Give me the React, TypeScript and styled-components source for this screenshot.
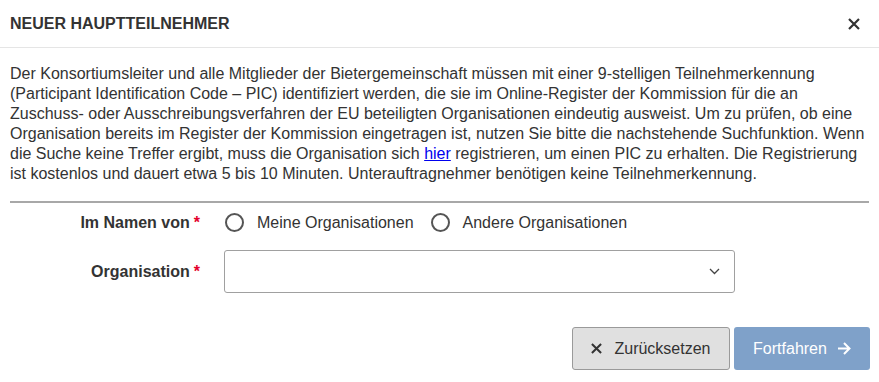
import React from "react";
import styled, { createGlobalStyle } from "styled-components";

const Global = createGlobalStyle`
  html, body { margin: 0; padding: 0; background: #fff; }
  body { font-family: "Liberation Sans", Arial, sans-serif; color: #333; }
  * { box-sizing: border-box; }
`;

const Dialog = styled.div`
  width: 879px;
  height: 382px;
  background: #fff;
  display: flex;
  flex-direction: column;
`;

const Header = styled.div`
  height: 48px;
  display: flex;
  align-items: center;
  justify-content: space-between;
  padding: 0 10px 0 10px;
  border-bottom: 1px solid #e5e5e5;
`;

const Title = styled.h1`
  margin: 0;
  font-size: 16px;
  font-weight: 700;
  color: #333;
  letter-spacing: 0;
`;

const CloseButton = styled.button`
  width: 30px;
  height: 30px;
  border: 0;
  background: transparent;
  padding: 0;
  display: flex;
  align-items: center;
  justify-content: center;
  color: #333;
  cursor: pointer;
`;

const Body = styled.div`
  padding: 16px 10px 0 10px;
  display: flex;
  flex-direction: column;
`;

const Intro = styled.p`
  margin: 0;
  font-size: 16px;
  line-height: 20px;
  color: #333;
`;

const Link = styled.a`
  color: #0000ee;
  text-decoration: underline;
`;

const Divider = styled.hr`
  margin: 17px 0 0 0;
  border: 0;
  border-top: 2px solid #a8a8a8;
  height: 0;
`;

const Form = styled.div`
  display: flex;
  flex-direction: column;
  padding-top: 6px;
  gap: 14px;
`;

const Row = styled.div<{ $h: number }>`
  display: grid;
  grid-template-columns: 190px 511px;
  column-gap: 24px;
  align-items: center;
  height: ${(p) => p.$h}px;
`;

const Label = styled.label`
  text-align: right;
  font-size: 16px;
  font-weight: 700;
  color: #333;
`;

const Req = styled.span`
  color: #e4002b;
  margin-left: 4px;
`;

const RadioGroup = styled.div`
  display: flex;
  align-items: center;
  gap: 17px;
  padding-left: 1px;
`;

const RadioOption = styled.label`
  display: flex;
  align-items: center;
  gap: 13px;
  font-size: 16px;
  color: #333;
`;

const RadioCircle = styled.span`
  width: 19px;
  height: 19px;
  border-radius: 50%;
  border: 2px solid #555;
  background: #fff;
  display: inline-block;
`;

const Select = styled.div`
  height: 43px;
  border: 1px solid #a0a0a0;
  border-radius: 3px;
  display: flex;
  align-items: center;
  justify-content: flex-end;
  padding-right: 14px;
  color: #444;
`;

const Footer = styled.div`
  display: flex;
  justify-content: flex-end;
  gap: 4px;
  padding: 34px 9px 0 0;
`;

const ResetButton = styled.button`
  width: 158px;
  height: 43px;
  border: 1px solid #9a9a9a;
  border-radius: 3px;
  background: #e0e0e0;
  color: #333;
  font-family: "Liberation Sans", Arial, sans-serif;
  font-size: 16px;
  display: flex;
  align-items: center;
  justify-content: center;
  gap: 12px;
  padding: 0;
`;

const PrimaryButton = styled.button`
  width: 136px;
  height: 43px;
  border: 0;
  border-radius: 3px;
  background: #7fa1c9;
  color: #fff;
  font-family: "Liberation Sans", Arial, sans-serif;
  font-size: 16px;
  display: flex;
  align-items: center;
  justify-content: center;
  gap: 10px;
  padding: 0;
`;

const XIcon = ({ size = 12, w = 2.2 }: { size?: number; w?: number }) => (
  <svg width={size} height={size} viewBox="0 0 12 12" fill="none">
    <path d="M1 1L11 11M11 1L1 11" stroke="currentColor" strokeWidth={w} strokeLinecap="butt" />
  </svg>
);

const Chevron = () => (
  <svg width="11" height="7" viewBox="0 0 11 7" fill="none">
    <path d="M1 1L5.5 5.5L10 1" stroke="#444" strokeWidth="1.3" />
  </svg>
);

const Arrow = () => (
  <svg width="14" height="13" viewBox="0 0 14 13" fill="none">
    <path d="M1 6.5H12.5M7 1L12.5 6.5L7 12" stroke="#fff" strokeWidth="2" />
  </svg>
);

export default function App() {
  return (
    <>
      <Global />
      <Dialog>
        <Header>
          <Title>NEUER HAUPTTEILNEHMER</Title>
          <CloseButton aria-label="Schließen">
            <XIcon size={12} w={2.2} />
          </CloseButton>
        </Header>
        <Body>
          <Intro>
            Der Konsortiumsleiter und alle Mitglieder der Bietergemeinschaft müssen mit einer 9-stelligen Teilnehmerkennung
            (Participant Identification Code – PIC) identifiziert werden, die sie im Online-Register der Kommission für die an
            Zuschuss- oder Ausschreibungsverfahren der EU beteiligten Organisationen eindeutig ausweist. Um zu prüfen, ob eine
            Organisation bereits im Register der Kommission eingetragen ist, nutzen Sie bitte die nachstehende Suchfunktion. Wenn
            die Suche keine Treffer ergibt, muss die Organisation sich <Link href="#">hier</Link> registrieren, um einen PIC zu erhalten. Die Registrierung
            ist kostenlos und dauert etwa 5 bis 10 Minuten. Unterauftragnehmer benötigen keine Teilnehmerkennung.
          </Intro>
          <Divider />
          <Form>
            <Row $h={27}>
              <Label>
                Im Namen von<Req>*</Req>
              </Label>
              <RadioGroup>
                <RadioOption>
                  <RadioCircle />
                  Meine Organisationen
                </RadioOption>
                <RadioOption>
                  <RadioCircle />
                  Andere Organisationen
                </RadioOption>
              </RadioGroup>
            </Row>
            <Row $h={43}>
              <Label>
                Organisation<Req>*</Req>
              </Label>
              <Select>
                <Chevron />
              </Select>
            </Row>
          </Form>
        </Body>
        <Footer>
          <ResetButton>
            <XIcon size={11} w={2.2} />
            Zurücksetzen
          </ResetButton>
          <PrimaryButton>
            Fortfahren
            <Arrow />
          </PrimaryButton>
        </Footer>
      </Dialog>
    </>
  );
}
